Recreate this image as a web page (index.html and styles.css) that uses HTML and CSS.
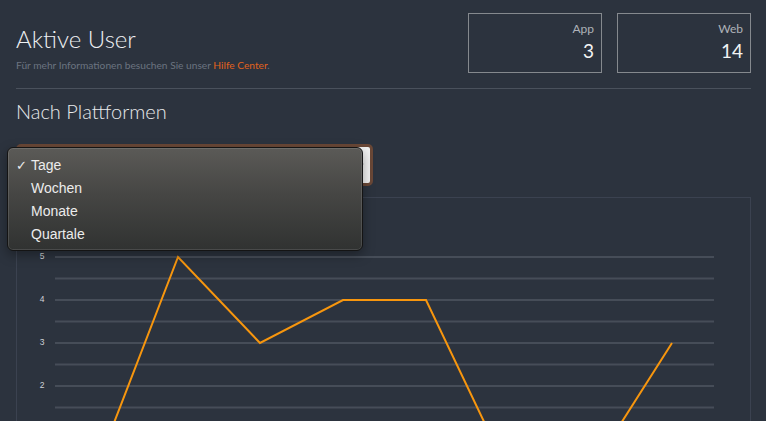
FILE: index.html
```html
<!DOCTYPE html>
<html lang="de">
<head>
<meta charset="utf-8">
<title>Aktive User</title>
<link rel="stylesheet" href="styles.css">
</head>
<body>
<div class="page">
  <header class="header">
    <div class="intro">
      <h1 class="title">Aktive User</h1>
      <p class="subtitle">Für mehr Informationen besuchen Sie unser <a class="link" href="#">Hilfe Center</a>.</p>
    </div>
    <div class="stats">
      <div class="stat">
        <div class="stat-label">App</div>
        <div class="stat-value">3</div>
      </div>
      <div class="stat">
        <div class="stat-label">Web</div>
        <div class="stat-value">14</div>
      </div>
    </div>
  </header>

  <h2 class="section-title">Nach Plattformen</h2>

  <div class="select-wrap">
    <div class="select-box">
      <svg class="select-arrow" width="8" height="8" viewBox="0 0 8 8"><path d="M1 2.5 L4 5.5 L7 2.5" fill="none" stroke="#333" stroke-width="1.4"/></svg>
    </div>
    <ul class="menu">
      <li class="menu-item checked"><span class="check">✓</span>Tage</li>
      <li class="menu-item">Wochen</li>
      <li class="menu-item">Monate</li>
      <li class="menu-item">Quartale</li>
    </ul>
  </div>

  <div class="chart-panel">
    <svg class="chart" width="733" height="240" viewBox="17 198 733 240">
      <g class="grid" stroke="#464d58" stroke-width="2">
        <line x1="55" x2="714" y1="257" y2="257"/>
        <line x1="55" x2="714" y1="278.5" y2="278.5"/>
        <line x1="55" x2="714" y1="300" y2="300"/>
        <line x1="55" x2="714" y1="321.5" y2="321.5"/>
        <line x1="55" x2="714" y1="343" y2="343"/>
        <line x1="55" x2="714" y1="364.5" y2="364.5"/>
        <line x1="55" x2="714" y1="386" y2="386"/>
        <line x1="55" x2="714" y1="407.5" y2="407.5"/>
        <line x1="55" x2="714" y1="429" y2="429"/>
      </g>
      <g class="ylabels" fill="#cfd2d6" font-size="8.5" text-anchor="middle" dominant-baseline="middle">
        <text x="42" y="257">5</text>
        <text x="42" y="300">4</text>
        <text x="42" y="343">3</text>
        <text x="42" y="386">2</text>
      </g>
      <polyline fill="none" stroke="#f7960e" stroke-width="2" stroke-linejoin="miter" points="95,472 178,257 260,343 343,300 426,300 508,472 590,472 672,343"/>
    </svg>
  </div>
</div>
</body>
</html>
```
FILE: styles.css
```css
* { box-sizing: border-box; }
html, body { margin: 0; padding: 0; }
body {
  background: #2c333e;
  font-family: Lato, "Liberation Sans", sans-serif;
  color: #e6e8ea;
  overflow: hidden;
}
.page {
  padding: 0 15px 0 16px;
}
.header {
  display: flex;
  justify-content: space-between;
  align-items: flex-start;
  padding-top: 13px;
  padding-bottom: 15px;
  border-bottom: 1px solid #4a515c;
}
.intro { padding-top: 11px; }
.title {
  margin: 0;
  font-weight: 300;
  font-size: 24px;
  line-height: 30px;
  color: #eef0f2;
}
.subtitle {
  margin: 5px 0 0;
  font-size: 10.2px;
  line-height: 12px;
  color: #6b7380;
}
.link {
  color: #e2621d;
  text-decoration: none;
}
.stats {
  display: flex;
  gap: 15px;
}
.stat {
  width: 134px;
  height: 60px;
  border: 1px solid #85898e;
  padding: 8px 7px 0 0;
  text-align: right;
}
.stat-label {
  font-size: 12px;
  line-height: 14px;
  color: #aeb2b8;
}
.stat-value {
  margin-top: 4px;
  font-size: 19px;
  line-height: 22px;
  color: #f2f3f4;
}
.section-title {
  margin: 9px 0 0;
  font-weight: 300;
  font-size: 20px;
  line-height: 26px;
  color: #e8eaec;
}
.select-wrap {
  position: relative;
  margin-top: 20px;
  width: 357px;
}
.select-box {
  height: 42px;
  background: #f2f2f2;
  border: 3px solid #6a4837;
  border-radius: 5px;
  display: flex;
  align-items: center;
  justify-content: flex-end;
  padding-right: 6px;
}
.select-arrow { display: block; }
.menu {
  position: absolute;
  left: -9px;
  top: 3px;
  width: 356px;
  margin: 0;
  padding: 6px 0 4px;
  list-style: none;
  border-radius: 6px;
  border: 1px solid #141414;
  background: linear-gradient(to bottom, #5b5a57 0%, #464644 45%, #303231 100%);
  box-shadow: inset 0 0 0 1px rgba(255,255,255,0.12), 0 4px 12px rgba(0,0,0,0.35);
  font-family: "Liberation Sans", Arial, sans-serif;
  font-size: 14px;
  color: #ececec;
}
.menu-item {
  position: relative;
  line-height: 23px;
  padding-left: 23px;
}
.check {
  position: absolute;
  left: 8px;
  top: 0;
  font-size: 13px;
}
.chart-panel {
  margin-top: 11px;
  height: 260px;
  border: 1px solid #3b4250;
  width: 735px;
}
.chart {
  display: block;
  font-family: "Liberation Sans", Arial, sans-serif;
}
```
